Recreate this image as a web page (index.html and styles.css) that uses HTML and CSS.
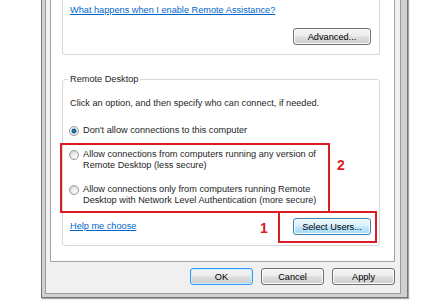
FILE: index.html
```html
<!DOCTYPE html>
<html lang="en">
<head>
    <meta charset="UTF-8">
    <title>System Properties - Remote</title>
    <link rel="stylesheet" href="styles.css">
</head>
<body>
    <div class="window">
        <div class="client">
            <div class="panel">
                <!-- REMOTE ASSISTANCE -->
                <fieldset class="group group-assist">
                    <a class="link" href="#">What happens when I enable Remote Assistance?</a>
                    <div class="group-foot end">
                        <button class="btn">Advanced...</button>
                    </div>
                </fieldset>
                <!-- REMOTE DESKTOP -->
                <fieldset class="group group-desktop">
                    <legend>Remote Desktop</legend>
                    <p class="intro">Click an option, and then specify who can connect, if needed.</p>
                    <label class="option first">
                        <span class="radio checked"></span>
                        <span>Don't allow connections to this computer</span>
                    </label>
                    <label class="option">
                        <span class="radio"></span>
                        <span>Allow connections from computers running any version of<br>Remote Desktop (less secure)</span>
                    </label>
                    <label class="option">
                        <span class="radio"></span>
                        <span>Allow connections only from computers running Remote<br>Desktop with Network Level Authentication (more secure)</span>
                    </label>
                    <div class="group-foot">
                        <a class="link" href="#">Help me choose</a>
                        <button class="btn btn-hot">Select Users...</button>
                    </div>
                </fieldset>
            </div>
            <div class="actions">
                <button class="btn btn-wide btn-default">OK</button>
                <button class="btn btn-wide">Cancel</button>
                <button class="btn btn-wide">Apply</button>
            </div>
        </div>
    </div>

    <!-- annotations -->
    <div class="mark mark-options"></div>
    <div class="mark mark-users"></div>
    <span class="step step-2">2</span>
    <span class="step step-1">1</span>
</body>
</html>
```

FILE: styles.css
```css
body {
    margin: 0;
    background: #fff;
    font-family: 'Liberation Sans', Arial, sans-serif;
    font-size: 9.2px;
    line-height: 11px;
    color: #1e1e1e;
    position: relative;
    height: 300px;
    overflow: hidden;
}
.window {
    margin: -24px 0 0 41px;
    width: 356px;
    border: 1px solid #747474;
    border-top: none;
    padding: 0 6px 3px 3px;
    background: #cfd1d3;
    box-shadow: 1px 1px 1px rgba(0, 0, 0, 0.35);
}
.client {
    border: 1px solid #9b9b9b;
    border-top: none;
    background: #f0f0f0;
    padding: 0 5px 8px 4px;
}
.panel {
    background: #fff;
    border: 1px solid #a3a3a3;
    border-top: none;
    padding: 9px 14px 15px 11px;
}
.group {
    margin: 0;
    min-width: 0;
    border: 1px solid #d5d9dc;
    border-radius: 3px;
    padding: 20px 8px 9px 7px;
}
.group-assist {
    border-top: none;
}
.group-desktop {
    margin-top: 18px;
    padding-top: 13px;
    padding-bottom: 10px;
}
.group legend {
    padding: 0 2px;
    margin-left: -2px;
    line-height: 12px;
    color: #1e1e1e;
}
.link {
    color: #0066cc;
    text-decoration: underline;
    display: block;
}
.intro {
    margin: 0;
}
.option {
    display: flex;
    align-items: flex-start;
    margin-top: 13px;
}
.option.first {
    margin-top: 16px;
}
.radio {
    flex: none;
    width: 10px;
    height: 10px;
    margin: 1px 4px 0 -1px;
    border-radius: 50%;
    box-sizing: border-box;
    border: 1px solid #9a9a9a;
    background: radial-gradient(circle at 65% 70%, #ffffff 0%, #e9e9e9 45%, #c9c9c9 100%);
}
.radio.checked {
    background: radial-gradient(circle, #3d9bd0 0%, #0c5a8e 30%, #1b6da3 40%, #e6e6e6 48%, #f4f4f4 100%);
}
.group-foot {
    display: flex;
    align-items: center;
    justify-content: space-between;
    margin-top: 12px;
}
.group-foot.end {
    justify-content: flex-end;
}
.btn {
    width: 78px;
    height: 17px;
    padding: 0;
    border: 1px solid #707070;
    border-radius: 3px;
    background: linear-gradient(#f4f4f4 0%, #ebebeb 48%, #dddddd 52%, #cfcfcf 100%);
    box-shadow: inset 0 0 0 1px #fbfbfb;
    font-family: inherit;
    font-size: 9.2px;
    color: #000;
}
.btn-hot {
    border-color: #3c7fb1;
    background: linear-gradient(#eaf6fd 0%, #d9f0fc 48%, #bee6fd 52%, #a7d9f5 100%);
}
.btn-default {
    border-color: #3399ff;
    box-shadow: inset 0 0 0 1px #c8ecff;
}
.btn-wide {
    width: 63px;
}
.actions {
    display: flex;
    justify-content: flex-end;
    gap: 8px;
    margin-top: 6px;
}
.mark {
    position: absolute;
    border: 2px solid #da1c25;
    box-sizing: border-box;
}
.mark-options {
    left: 60px;
    top: 143px;
    width: 270px;
    height: 70px;
}
.mark-users {
    left: 278px;
    top: 211px;
    width: 99px;
    height: 32px;
}
.step {
    position: absolute;
    font-family: 'Liberation Sans', Arial, sans-serif;
    font-weight: bold;
    font-size: 14px;
    line-height: 14px;
    color: #da1c25;
}
.step-2 {
    left: 337px;
    top: 158px;
}
.step-1 {
    left: 260px;
    top: 221px;
}
```
